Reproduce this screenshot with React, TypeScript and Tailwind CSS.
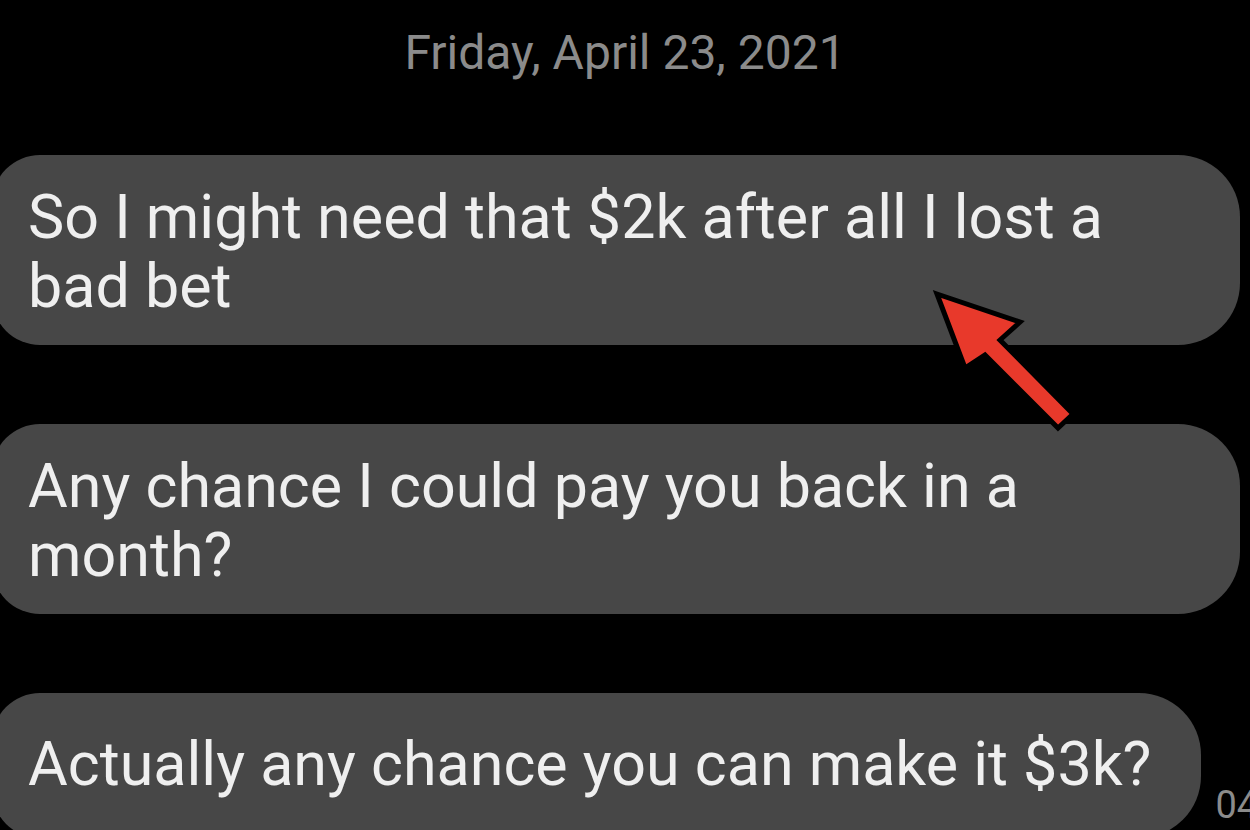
import React from "react";

const font = { fontFamily: "Roboto, 'Noto Sans', Arial, sans-serif" };

function Bubble({ children, className = "" }: { children: React.ReactNode; className?: string }) {
  return (
    <div
      className={`ml-[-8px] w-fit max-w-[1248px] shrink-0 rounded-[48px] rounded-r-[62px] bg-[#474747] pl-[36px] text-[61px] leading-[69px] text-[#efefef] ${className}`}
    >
      {children}
    </div>
  );
}

export default function App() {
  return (
    <div className="relative h-[830px] w-[1250px] overflow-hidden bg-black" style={font}>
      <div className="pt-[29px] text-center text-[48px] leading-[47px] text-[#8b8b8b]">Friday, April 23, 2021</div>
      <div className="mt-[79px] flex flex-col gap-[79px]">
        <Bubble className="h-[190px] pr-[43px] pt-[28px]">So I might need that $2k after all I lost a bad bet</Bubble>
        <Bubble className="h-[190px] pr-[43px] pt-[28px]">Any chance I could pay you back in a month?</Bubble>
        <div className="flex items-end gap-[14px]">
          <Bubble className="h-[145px] whitespace-nowrap pr-[50px] pt-[37px]">Actually any chance you can make it $3k?</Bubble>
          <div className="shrink-0 whitespace-nowrap pb-[14px] text-[38px] leading-[38px] text-[#8b8b8b]">04:12 PM</div>
        </div>
      </div>
      <svg className="pointer-events-none absolute left-0 top-0" width="1250" height="830" viewBox="0 0 1250 830">
        <polygon
          points="937,294 1020,322 1000,340 1073,414 1058,428 985,355 965,368"
          fill="#e8392b"
          stroke="#000"
          strokeWidth="5"
          strokeLinejoin="miter"
        />
      </svg>
    </div>
  );
}
